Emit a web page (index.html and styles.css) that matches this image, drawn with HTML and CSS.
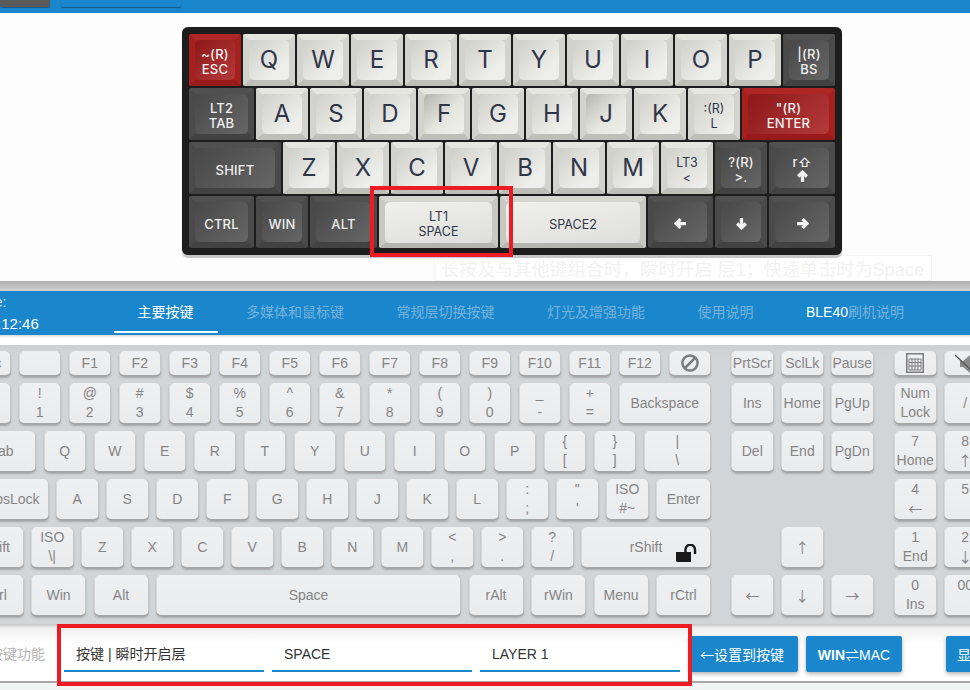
FILE: index.html
```html
<!DOCTYPE html>
<html lang="en">
<head>
    <meta charset="UTF-8">
    <title>Keymap editor</title>
    <link rel="stylesheet" href="styles.css">
</head>
<body>
    <div class="top-bar">
        <div class="top-btn top-btn-gray"></div>
        <div class="top-btn top-btn-blue"></div>
    </div>

    <!-- keymap preview -->
    <div class="stage">
        <div class="frame">
            <div class="mini-row">
                <div class="cap cap-red"><div class="face">~(R)<br>ESC</div></div>
                <div class="cap"><div class="face big">Q</div></div>
                <div class="cap"><div class="face big">W</div></div>
                <div class="cap"><div class="face big">E</div></div>
                <div class="cap"><div class="face big">R</div></div>
                <div class="cap"><div class="face big">T</div></div>
                <div class="cap"><div class="face big">Y</div></div>
                <div class="cap"><div class="face big">U</div></div>
                <div class="cap"><div class="face big">I</div></div>
                <div class="cap"><div class="face big">O</div></div>
                <div class="cap"><div class="face big">P</div></div>
                <div class="cap cap-dark"><div class="face">|(R)<br>BS</div></div>
            </div>
            <div class="mini-row">
                <div class="cap cap-dark w-65"><div class="face">LT2<br>TAB</div></div>
                <div class="cap"><div class="face big">A</div></div>
                <div class="cap"><div class="face big">S</div></div>
                <div class="cap"><div class="face big">D</div></div>
                <div class="cap"><div class="face big homing">F</div></div>
                <div class="cap"><div class="face big">G</div></div>
                <div class="cap"><div class="face big">H</div></div>
                <div class="cap"><div class="face big homing">J</div></div>
                <div class="cap"><div class="face big">K</div></div>
                <div class="cap"><div class="face">:(R)<br>L</div></div>
                <div class="cap cap-red w-93"><div class="face">"(R)<br>ENTER</div></div>
            </div>
            <div class="mini-row">
                <div class="cap cap-dark w-92"><div class="face single">SHIFT</div></div>
                <div class="cap"><div class="face big">Z</div></div>
                <div class="cap"><div class="face big">X</div></div>
                <div class="cap"><div class="face big">C</div></div>
                <div class="cap"><div class="face big">V</div></div>
                <div class="cap"><div class="face big">B</div></div>
                <div class="cap"><div class="face big">N</div></div>
                <div class="cap"><div class="face big">M</div></div>
                <div class="cap"><div class="face">LT3<br>&lt;</div></div>
                <div class="cap cap-dark"><div class="face">?(R)<br>&gt;.</div></div>
                <div class="cap cap-dark w-66"><div class="face">r⇧<br>
                    <svg class="arrow" viewBox="0 0 12 12"><path d="M6 11V2M2 6l4-4 4 4"/></svg></div></div>
            </div>
            <div class="mini-row">
                <div class="cap cap-dark w-65"><div class="face single">CTRL</div></div>
                <div class="cap cap-dark"><div class="face single">WIN</div></div>
                <div class="cap cap-dark w-67"><div class="face single">ALT</div></div>
                <div class="cap cap-space w-119"><div class="face">LT1<br>SPACE</div></div>
                <div class="cap cap-space w-146"><div class="face single">SPACE2</div></div>
                <div class="cap cap-dark w-65"><div class="face single">
                    <svg class="arrow" viewBox="0 0 12 12"><path d="M11 6H2M6 2L2 6l4 4"/></svg></div></div>
                <div class="cap cap-dark"><div class="face single">
                    <svg class="arrow" viewBox="0 0 12 12"><path d="M6 1v9M2 6l4 4 4-4"/></svg></div></div>
                <div class="cap cap-dark w-66"><div class="face single">
                    <svg class="arrow" viewBox="0 0 12 12"><path d="M1 6h9M6 2l4 4-4 4"/></svg></div></div>
            </div>
        </div>
        <div class="mark mark-key"></div>
        <div class="tip">长按及与其他键组合时，瞬时开启 层1；快速单击时为Space</div>
    </div>

    <div class="divider"></div>

    <!-- tabs -->
    <div class="nav">
        <div class="clock">
            <div>Time:</div>
            <div class="clock-val">000:12:46</div>
        </div>
        <div class="tab active">主要按键</div>
        <div class="tab">多媒体和鼠标键</div>
        <div class="tab">常规层切换按键</div>
        <div class="tab">灯光及增强功能</div>
        <div class="tab">使用说明</div>
        <div class="tab"><span class="white">BLE40</span>刷机说明</div>
    </div>
    <div class="strip"></div>

    <!-- full keyboard -->
    <div class="board">
        <div class="block block-main">
            <div class="row row-f">
                <div class="key">Esc</div>
                <div class="key"></div>
                <div class="key">F1</div>
                <div class="key">F2</div>
                <div class="key">F3</div>
                <div class="key">F4</div>
                <div class="key">F5</div>
                <div class="key">F6</div>
                <div class="key">F7</div>
                <div class="key">F8</div>
                <div class="key">F9</div>
                <div class="key">F10</div>
                <div class="key">F11</div>
                <div class="key">F12</div>
                <div class="key">
                    <svg class="icon-block" viewBox="0 0 20 20"><circle cx="10" cy="10" r="7.6"/><path d="M15 5L5 15"/></svg>
                </div>
            </div>
            <div class="row">
                <div class="key"><span>~</span><span>`</span></div>
                <div class="key"><span>!</span><span>1</span></div>
                <div class="key"><span>@</span><span>2</span></div>
                <div class="key"><span>#</span><span>3</span></div>
                <div class="key"><span>$</span><span>4</span></div>
                <div class="key"><span>%</span><span>5</span></div>
                <div class="key"><span>^</span><span>6</span></div>
                <div class="key"><span>&amp;</span><span>7</span></div>
                <div class="key"><span>*</span><span>8</span></div>
                <div class="key"><span>(</span><span>9</span></div>
                <div class="key"><span>)</span><span>0</span></div>
                <div class="key"><span>_</span><span>-</span></div>
                <div class="key"><span>+</span><span>=</span></div>
                <div class="key k2">Backspace</div>
            </div>
            <div class="row">
                <div class="key k15">Tab</div>
                <div class="key">Q</div>
                <div class="key">W</div>
                <div class="key">E</div>
                <div class="key">R</div>
                <div class="key">T</div>
                <div class="key">Y</div>
                <div class="key">U</div>
                <div class="key">I</div>
                <div class="key">O</div>
                <div class="key">P</div>
                <div class="key"><span>{</span><span>[</span></div>
                <div class="key"><span>}</span><span>]</span></div>
                <div class="key k15"><span>|</span><span>\</span></div>
            </div>
            <div class="row">
                <div class="key k175">CapsLock</div>
                <div class="key">A</div>
                <div class="key">S</div>
                <div class="key">D</div>
                <div class="key">F</div>
                <div class="key">G</div>
                <div class="key">H</div>
                <div class="key">J</div>
                <div class="key">K</div>
                <div class="key">L</div>
                <div class="key"><span>:</span><span>;</span></div>
                <div class="key"><span>"</span><span>'</span></div>
                <div class="key"><span>ISO</span><span>#~</span></div>
                <div class="key k125">Enter</div>
            </div>
            <div class="row">
                <div class="key k125">Shift</div>
                <div class="key"><span>ISO</span><span>\|</span></div>
                <div class="key">Z</div>
                <div class="key">X</div>
                <div class="key">C</div>
                <div class="key">V</div>
                <div class="key">B</div>
                <div class="key">N</div>
                <div class="key">M</div>
                <div class="key"><span>&lt;</span><span>,</span></div>
                <div class="key"><span>&gt;</span><span>.</span></div>
                <div class="key"><span>?</span><span>/</span></div>
                <div class="key k275 has-lock">rShift
                    <svg class="icon-lock" viewBox="0 0 22 18"><path class="lock-body" d="M0 8h15v10H1.500Q0 18 0 16.500z"/><path class="lock-arc" d="M9.500 8V5.500a4.700 4.700 0 0 1 9.500 0V10"/></svg>
                </div>
            </div>
            <div class="row">
                <div class="key k125">Ctrl</div>
                <div class="key k125">Win</div>
                <div class="key k125">Alt</div>
                <div class="key k625">Space</div>
                <div class="key k125">rAlt</div>
                <div class="key k125">rWin</div>
                <div class="key k125">Menu</div>
                <div class="key k125">rCtrl</div>
            </div>
        </div>

        <div class="block block-nav">
            <div class="row row-f">
                <div class="key">PrtScr</div>
                <div class="key">SclLk</div>
                <div class="key">Pause</div>
            </div>
            <div class="row">
                <div class="key">Ins</div>
                <div class="key">Home</div>
                <div class="key">PgUp</div>
            </div>
            <div class="row">
                <div class="key">Del</div>
                <div class="key">End</div>
                <div class="key">PgDn</div>
            </div>
            <div class="row"></div>
            <div class="row row-up">
                <div class="key cjk">↑</div>
            </div>
            <div class="row">
                <div class="key cjk">←</div>
                <div class="key cjk">↓</div>
                <div class="key cjk">→</div>
            </div>
        </div>

        <div class="block block-num">
            <div class="row row-f">
                <div class="key">
                    <svg class="icon-calc" viewBox="0 0 18 20"><rect x="0.750" y="0.750" width="16.500" height="18.500"/><path class="calc-grid" d="M3 6h12v11H3zM3 9.500h12M3 13h12M6 6v11M9 6v11M12 6v11"/></svg>
                </div>
                <div class="key">
                    <svg class="icon-mute" viewBox="0 0 22 20"><path class="mute-body" d="M6 7h3l7-6v18l-7-6H6z"/><path class="mute-line" d="M1 1l18 17"/></svg>
                </div>
            </div>
            <div class="row">
                <div class="key"><span>Num</span><span>Lock</span></div>
                <div class="key">/</div>
            </div>
            <div class="row">
                <div class="key"><span>7</span><span>Home</span></div>
                <div class="key"><span>8</span><span class="cjk">↑</span></div>
            </div>
            <div class="row">
                <div class="key"><span>4</span><span class="cjk">←</span></div>
                <div class="key"><span>5</span><span></span></div>
            </div>
            <div class="row">
                <div class="key"><span>1</span><span>End</span></div>
                <div class="key"><span>2</span><span class="cjk">↓</span></div>
            </div>
            <div class="row">
                <div class="key"><span>0</span><span>Ins</span></div>
                <div class="key"><span>00</span><span></span></div>
            </div>
        </div>
    </div>

    <!-- bottom settings bar -->
    <div class="settings">
        <div class="settings-label">按键功能</div>
        <div class="field">按键 | 瞬时开启层</div>
        <div class="field">SPACE</div>
        <div class="field">LAYER 1</div>
        <button class="btn btn-set"><span class="cjk">←</span>设置到按键</button>
        <button class="btn btn-os"><b>WIN</b>⇌MAC</button>
        <button class="btn btn-show">显示</button>
        <div class="mark mark-bar"></div>
    </div>
</body>
</html>
```

FILE: styles.css
```css
html, body {
    margin: 0;
    height: 690px;
    overflow: hidden;
}
body {
    width: 970px;
    background: #f3f4f4;
    font-family: "Liberation Sans", "Noto Sans CJK SC", sans-serif;
    font-size: 14px;
}
.cjk {
    font-family: "Noto Sans CJK SC", sans-serif;
}

/* top */
.top-bar {
    display: flex;
    gap: 11px;
    height: 13px;
    background: #1a86cc;
    box-shadow: 0 1px 2px rgba(0, 0, 0, 0.45);
    position: relative;
}
.top-btn {
    height: 7px;
    border-radius: 0 0 2px 2px;
}
.top-btn-gray {
    width: 50px;
    background: #5a5a5a;
    box-shadow: 0 1px 1px rgba(0, 0, 0, 0.3);
}
.top-btn-blue {
    width: 120px;
    background: #1a86cc;
    box-shadow: 0 1px 1px rgba(0, 0, 0, 0.35);
}
.stage {
    position: relative;
    height: 254px;
    padding-top: 14px;
    background: #fdfdfd;
}
.frame {
    position: relative;
    z-index: 1;
    display: flex;
    flex-direction: column;
    gap: 2px;
    box-sizing: border-box;
    width: 660px;
    height: 228px;
    margin-left: 182px;
    padding: 7px;
    background: #1d1d1d;
    border-radius: 6px;
    box-shadow: 0 3px 1px #c4c4c4;
}
.mini-row {
    display: flex;
    gap: 2px;
    height: 52px;
}
.cap {
    flex: none;
    box-sizing: border-box;
    width: 52px;
    height: 52px;
    border-style: solid;
    border-width: 6px;
    border-color: #e6e6e1 #d3d3ce #bfbfba;
    border-radius: 2px;
    background: #d3d3ce;
}
.face {
    height: 40px;
    box-sizing: border-box;
    padding-top: 7px;
    border-radius: 5px;
    background: linear-gradient(135deg, #d2d2cd, #f0f0ec);
    color: #30364a;
    font-family: Inter, "Noto Sans", sans-serif;
    font-size: 12.500px;
    line-height: 15px;
    text-align: center;
}
.face.single {
    padding-top: 15px;
}
.face.big {
    padding-top: 0;
    font-size: 24px;
    line-height: 40px;
    background: linear-gradient(135deg, #cfcfca, #eeeeea 75%);
}
.face.homing {
    background: linear-gradient(135deg, #b5b5b0, #e6e6e1 55%, #efefeb);
}
.cap-dark {
    border-color: #505050 #4a4a4a #424242;
    background: #4a4a4a;
}
.cap-dark .face {
    background: linear-gradient(135deg, #484848, #666666);
    color: #eeeeee;
    font-weight: 500;
    font-size: 13px;
    letter-spacing: 0.2px;
}
.cap-red {
    border-color: #b02525 #a62020 #981a1a;
    background: #a62020;
}
.cap-red .face {
    background: linear-gradient(135deg, #8c1818, #b43a3a);
    color: #f2f2f2;
    font-weight: 500;
    font-size: 13px;
    letter-spacing: 0.2px;
}
.cap-space {
    border-color: #d6d6d1 #c8c8c3 #b6b6b1;
    border-width: 6px 6px 5px;
    background: #c8c8c3;
}
.cap-space .face {
    height: 41px;
    background: linear-gradient(170deg, #f0f0ec, #dededa);
}
.w-65 { width: 65px; }
.w-66 { width: 66px; }
.w-67 { width: 67px; }
.w-92 { width: 92px; }
.w-93 { width: 93px; }
.w-119 { width: 119px; }
.w-146 { width: 146px; }
.arrow {
    width: 13px;
    height: 13px;
    fill: none;
    stroke: #f4f4f4;
    stroke-width: 3;
}
.mark {
    position: absolute;
    z-index: 2;
    box-sizing: border-box;
    border: 4px solid #ed1c24;
}
.mark-key {
    left: 370px;
    top: 173px;
    width: 143px;
    height: 71px;
}
.tip {
    position: absolute;
    left: 434px;
    top: 242px;
    box-sizing: border-box;
    width: 498px;
    height: 26px;
    padding-left: 6px;
    border: 1px solid #f5f5f5;
    background: #ffffff;
    color: #f2f2f2;
    font-size: 18px;
    letter-spacing: 0.100px;
    line-height: 28px;
    white-space: nowrap;
}
.divider {
    height: 10px;
    background: linear-gradient(#aeaeae, #d2d2d2);
}

/* tabs */
.nav {
    display: flex;
    gap: 4.500px;
    height: 44px;
    background: #1a86cc;
    color: #76b3dc;
}
.clock {
    flex: none;
    width: 113px;
    margin-left: -28px;
    margin-right: 24px;
    padding-top: 1px;
    color: #d5e7f4;
    line-height: 20px;
}
.clock-val {
    color: #ffffff;
    font-size: 15px;
    line-height: 23px;
}
.tab {
    flex: none;
    box-sizing: border-box;
    height: 42px;
    padding: 0 24px;
    line-height: 42px;
}
.tab.active {
    color: #ffffff;
    border-bottom: 2px solid #ffffff;
}
.white {
    color: #ffffff;
}
.strip {
    height: 10px;
    background: linear-gradient(#d8d8d8, #ffffff 3px);
}

/* keyboard */
.board {
    display: flex;
    box-sizing: border-box;
    width: 1100px;
    height: 279px;
    margin-left: -31.500px;
    padding-top: 6px;
    background: linear-gradient(#cdd0d3, #d2d5d8 12px);
}
.block {
    flex: none;
    display: flex;
    flex-direction: column;
    gap: 6px;
}
.block-main {
    width: 742.500px;
}
.block-nav {
    width: 142.500px;
    margin-left: 20px;
}
.block-num {
    width: 142.500px;
    margin-left: 20.500px;
}
.row {
    display: flex;
    gap: 7.500px;
    height: 42px;
}
.row-f {
    height: 26px;
}
.row-up {
    padding-left: 50px;
}
.key {
    flex: none;
    position: relative;
    display: flex;
    flex-direction: column;
    align-items: center;
    justify-content: center;
    box-sizing: border-box;
    width: 42.500px;
    padding-bottom: 2px;
    border-radius: 5px;
    background: linear-gradient(#eff0f2, #eaebed);
    box-shadow: inset 0 -2px 0 #a5a5a5, inset 1px 0 0 #d8d8d8, inset -1px 0 0 #c6c6c6, 0 1px 2px rgba(0, 0, 0, 0.2);
    color: #858585;
    line-height: 19px;
    white-space: nowrap;
}
.k125 { width: 55px; }
.k15 { width: 67.500px; }
.k175 { width: 80px; }
.k2 { width: 92.500px; }
.k275 { width: 130px; }
.k625 { width: 305px; }
.key span {
    height: 19px;
}
.icon-block {
    width: 20px;
    height: 20px;
    fill: none;
    stroke: #7c7c7c;
    stroke-width: 2.500;
}
.icon-calc {
    width: 18px;
    height: 20px;
    fill: none;
    stroke: #7d7b7c;
    stroke-width: 1.500;
}
.calc-grid {
    stroke-width: 1;
}
.icon-mute {
    position: absolute;
    left: 10px;
    top: 3px;
    width: 22px;
    height: 20px;
}
.mute-body {
    fill: #8a8a8a;
}
.mute-line {
    stroke: #555555;
    stroke-width: 1.200;
}
.icon-lock {
    position: absolute;
    right: 13px;
    bottom: 7px;
    width: 22px;
    height: 18px;
}
.lock-body {
    fill: #1a1a1a;
}
.lock-arc {
    fill: none;
    stroke: #1a1a1a;
    stroke-width: 2.400;
}

/* bottom */
.settings {
    position: relative;
    display: flex;
    align-items: flex-start;
    box-sizing: border-box;
    height: 59px;
    background: linear-gradient(#c4c4c4, #f0f0f0 4px, #ffffff 20px);
    border-bottom: 2px solid #a8a8a8;
}
.settings-label {
    flex: none;
    width: 56px;
    margin-left: -11px;
    margin-right: 19px;
    padding-top: 20px;
    color: #b5b5b5;
    line-height: 20px;
}
.field {
    flex: none;
    box-sizing: border-box;
    width: 200px;
    height: 48px;
    margin-right: 8px;
    padding: 20px 0 0 12px;
    border-bottom: 2px solid #1a86cc;
    color: #333333;
    line-height: 20px;
}
.btn {
    flex: none;
    height: 36px;
    margin-top: 12px;
    padding: 0;
    border: 0;
    border-radius: 2px;
    background: #1a86cc;
    box-shadow: 0 2px 4px rgba(0, 0, 0, 0.3);
    color: #ffffff;
    font-family: inherit;
    font-size: 14px;
}
.btn-set {
    width: 109px;
    margin-left: 1px;
    padding-right: 3px;
}
.btn-os {
    width: 96px;
    margin-left: 8px;
}
.btn-show {
    width: 80px;
    margin-left: 44px;
    padding-left: 11px;
    text-align: left;
    white-space: nowrap;
}
.mark-bar {
    left: 57px;
    top: 0;
    width: 635px;
    height: 62px;
}
```
